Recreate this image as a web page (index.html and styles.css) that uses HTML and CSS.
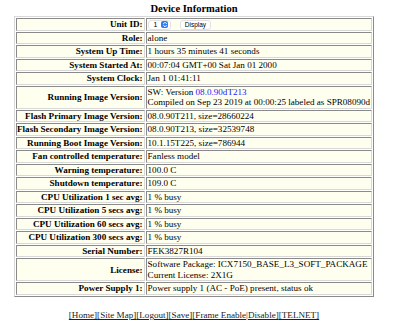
FILE: index.html
```html
<!DOCTYPE html>
<html lang="en">
<head>
  <meta charset="UTF-8" />
  <title>Device Information</title>
  <link rel="stylesheet" href="styles.css">
</head>
<body>
  <div class="title">Device Information</div>

  <table class="info">
    <tr>
      <th>Unit ID:</th>
      <td>
        <span class="unit-select">1 <span class="arrows"><svg width="6" height="7" viewBox="0 0 6 7"><path d="M1.2 3 L3 1.2 L4.8 3 M1.2 4 L3 5.8 L4.8 4" fill="none" stroke="#fff" stroke-width="1"/></svg></span></span>
        <span class="btn">Display</span>
      </td>
    </tr>
    <tr><th>Role:</th><td>alone</td></tr>
    <tr><th>System Up Time:</th><td>1 hours 35 minutes 41 seconds</td></tr>
    <tr><th>System Started At:</th><td>00:07:04 GMT+00 Sat Jan 01 2000</td></tr>
    <tr><th>System Clock:</th><td>Jan 1 01:41:11</td></tr>
    <tr>
      <th>Running Image Version:</th>
      <td>SW: Version <a href="#">08.0.90dT213</a><br>Compiled on Sep 23 2019 at 00:00:25 labeled as SPR08090d</td>
    </tr>
    <tr><th>Flash Primary Image Version:</th><td>08.0.90T211, size=28660224</td></tr>
    <tr><th>Flash Secondary Image Version:</th><td>08.0.90T213, size=32539748</td></tr>
    <tr><th>Running Boot Image Version:</th><td>10.1.15T225, size=786944</td></tr>
    <tr><th>Fan controlled temperature:</th><td>Fanless model</td></tr>
    <tr><th>Warning temperature:</th><td>100.0 C</td></tr>
    <tr><th>Shutdown temperature:</th><td>109.0 C</td></tr>
    <tr><th>CPU Utilization 1 sec avg:</th><td>1 % busy</td></tr>
    <tr><th>CPU Utilization 5 secs avg:</th><td>1 % busy</td></tr>
    <tr><th>CPU Utilization 60 secs avg:</th><td>1 % busy</td></tr>
    <tr><th>CPU Utilization 300 secs avg:</th><td>1 % busy</td></tr>
    <tr><th>Serial Number:</th><td>FEK3827R104</td></tr>
    <tr>
      <th>License:</th>
      <td>Software Package: ICX7150_BASE_L3_SOFT_PACKAGE<br>Current License: 2X1G</td>
    </tr>
    <tr><th>Power Supply 1:</th><td>Power supply 1 (AC - PoE) present, status ok</td></tr>
  </table>

  <div class="footer">
    <a href="#">[Home]</a><a href="#">[Site Map]</a><a href="#">[Logout]</a><a href="#">[Save]</a><a href="#">[Frame Enable|Disable]</a><a href="#">[TELNET]</a>
  </div>
</body>
</html>
```

FILE: styles.css
```css
body {
  font-family: "Liberation Serif", "Times New Roman", serif;
  font-size: 9.1px;
  color: #000;
  background: #fff;
  margin: 0;
  padding: 4px 0 0 14px;
  width: 360px;
}
.title {
  text-align: center;
  font-weight: bold;
  font-size: 10.5px;
  line-height: 10px;
  margin-bottom: 2px;
}
.info {
  width: 100%;
  border: 1px solid;
  border-color: #d8d8d8 #8a8a8a #8a8a8a #d8d8d8;
  border-spacing: 1px;
  background: #fff;
}
.info th,
.info td {
  background: #fffff0;
  border: 1px solid;
  border-color: #8a8a8a #d8d8d8 #d8d8d8 #8a8a8a;
  padding: 0 1px 0 0;
  line-height: 10.5px;
  white-space: nowrap;
}
.info th {
  text-align: right;
}
.info td {
  text-align: left;
  font-weight: normal;
  width: 100%;
  padding: 0 0 0 1px;
}
.info a {
  color: #1a1aff;
  text-decoration: none;
}
.unit-select {
  display: inline-flex;
  align-items: center;
  gap: 4px;
  font-family: "Liberation Sans", Arial, sans-serif;
  font-size: 7px;
  background: #fff;
  border: 1px solid #e2e2e2;
  border-radius: 3px;
  padding: 0 2px 0 5px;
  height: 10px;
  box-sizing: border-box;
  vertical-align: middle;
}
.arrows {
  display: inline-flex;
  align-items: center;
  justify-content: center;
  width: 7px;
  height: 7px;
  border-radius: 2px;
  background: #2a7cf6;
}
.btn {
  display: inline-block;
  font-family: "Liberation Sans", Arial, sans-serif;
  font-size: 6.5px;
  background: #fff;
  border: 1px solid #e2e2e2;
  border-radius: 3px;
  padding: 0 4px;
  line-height: 8px;
  margin-left: 6px;
  vertical-align: middle;
}
.footer {
  text-align: center;
  margin-top: 13px;
}
.footer a {
  color: #222;
}
```
